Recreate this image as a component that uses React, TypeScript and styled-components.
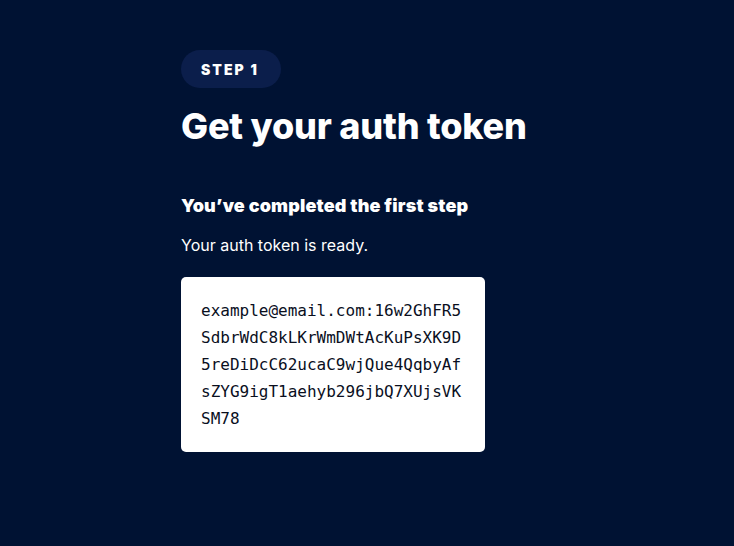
import React from 'react';
import styled, { createGlobalStyle } from 'styled-components';

const GlobalStyle = createGlobalStyle`
  html, body {
    margin: 0;
    padding: 0;
    background: #001233;
  }
  body {
    font-family: Inter, "Noto Sans", sans-serif;
    color: #ffffff;
    -webkit-font-smoothing: antialiased;
  }
`;

const Page = styled.main`
  min-height: 546px;
  background: #001233;
  padding-top: 50px;
  box-sizing: border-box;
`;

const Column = styled.section`
  width: 372px;
  margin: 0 auto;
  display: flex;
  flex-direction: column;
  align-items: flex-start;
`;

const StepBadge = styled.span`
  display: inline-flex;
  align-items: center;
  justify-content: center;
  height: 38px;
  padding: 0 22px 0 20px;
  border-radius: 19px;
  background: #0b1e4b;
  font-size: 14px;
  font-weight: 900;
  letter-spacing: 2px;
  text-transform: uppercase;
`;

const Title = styled.h1`
  margin: 17px 0 0;
  font-size: 36px;
  line-height: 42px;
  font-weight: 800;
  letter-spacing: -0.2px;
`;

const Subtitle = styled.h2`
  margin: 47px 0 0;
  font-size: 18px;
  line-height: 23px;
  font-weight: 900;
  letter-spacing: 0.15px;
`;

const Message = styled.p`
  margin: 16px 0 0;
  font-size: 16px;
  line-height: 24px;
  font-weight: 400;
`;

const TokenCard = styled.div`
  margin-top: 20px;
  width: 304px;
  box-sizing: border-box;
  padding: 20px;
  background: #ffffff;
  border-radius: 5px;
  color: #0a0f1e;
  font-family: "DejaVu Sans Mono", "Liberation Mono", monospace;
  font-size: 16px;
  line-height: 27px;
  word-break: break-all;
`;

const token =
  'example@email.com:16w2GhFR5SdbrWdC8kLKrWmDWtAcKuPsXK9D5reDiDcC62ucaC9wjQue4QqbyAfsZYG9igT1aehyb296jbQ7XUjsVKSM78';

export default function App() {
  return (
    <>
      <GlobalStyle />
      <Page>
        <Column>
          <StepBadge>Step 1</StepBadge>
          <Title>Get your auth token</Title>
          <Subtitle>You’ve completed the first step</Subtitle>
          <Message>Your auth token is ready.</Message>
          <TokenCard>{token}</TokenCard>
        </Column>
      </Page>
    </>
  );
}
